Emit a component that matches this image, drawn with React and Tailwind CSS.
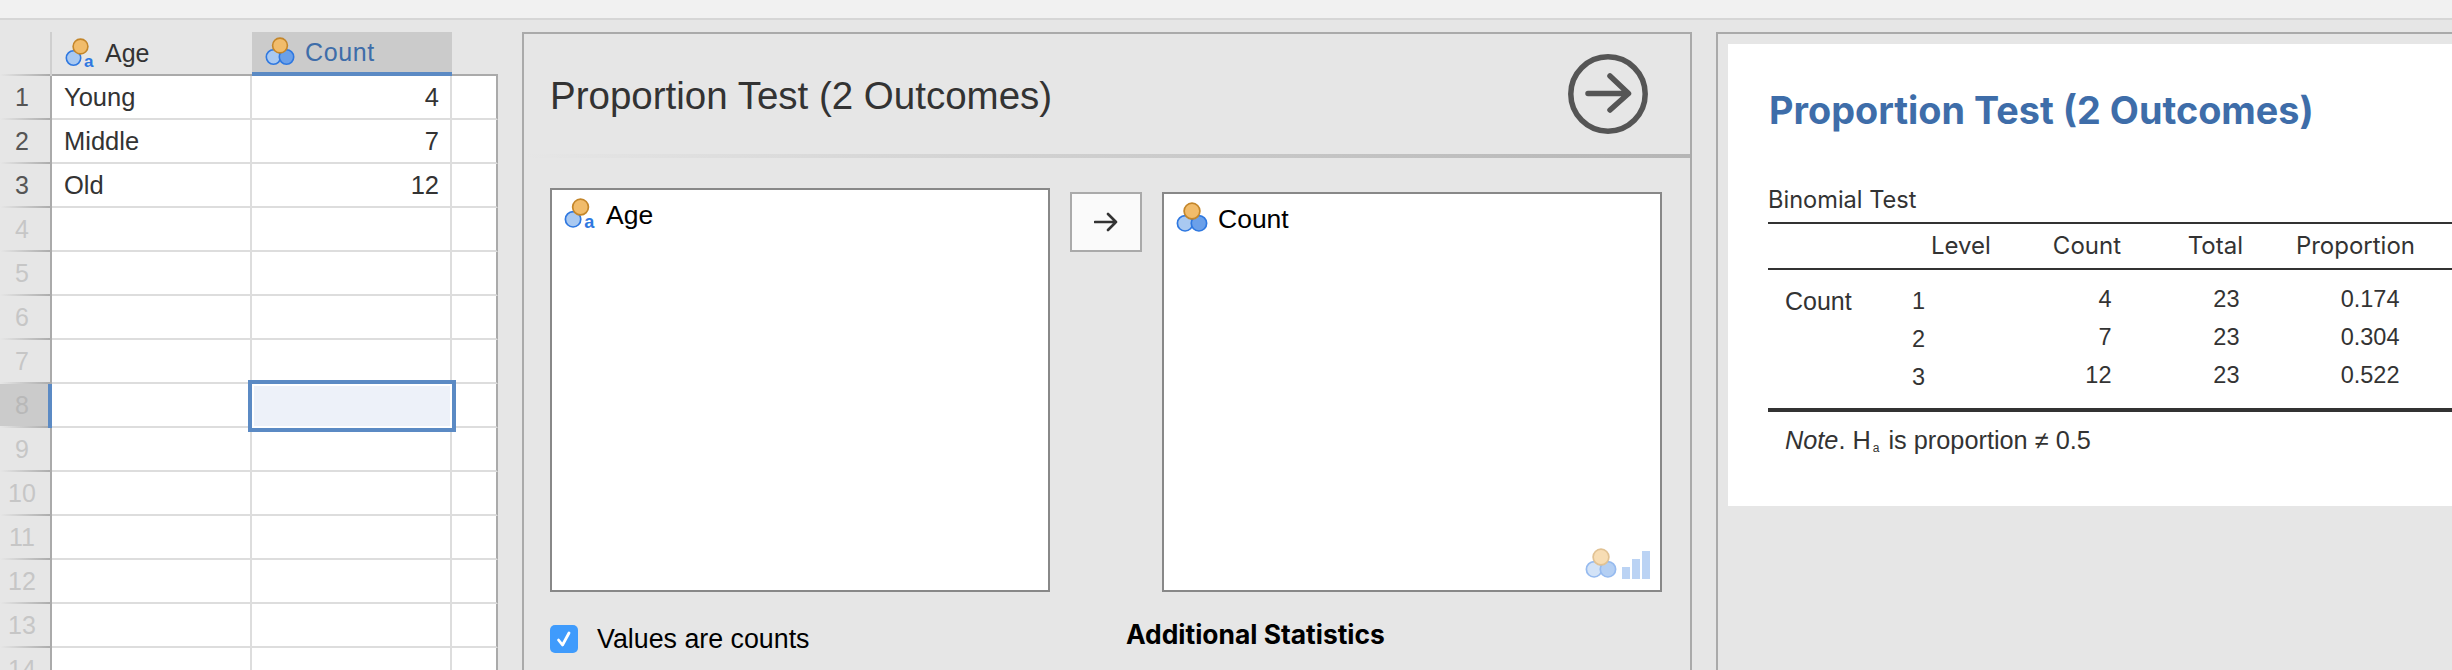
const helv = "font-['Liberation_Sans',Arial,sans-serif]";
const inter = "font-['Inter',sans-serif]";

const VarIcon = ({ kind, className = "" }) => (
  <svg viewBox="0 0 30 30" className={`overflow-visible ${className}`}>
    <circle cx="8.5" cy="20" r="7.2" fill="#a9c9f1" stroke="#2f78e0" strokeWidth="1.6" />
    {kind === "nominal" ? (
      <>
        <circle cx="21.5" cy="20" r="7.2" fill="#6ba0e9" stroke="#2f78e0" strokeWidth="1.6" />
        <circle cx="15" cy="8.5" r="7.4" fill="#f1bc6b" stroke="#c4862a" strokeWidth="1.6" />
      </>
    ) : (
      <>
        <circle cx="15.5" cy="8.5" r="7.4" fill="#f1bc6b" stroke="#c4862a" strokeWidth="1.6" />
        <text x="19" y="28.5" fontSize="17" fontWeight="700" fill="#2f78e0" fontFamily="Liberation Sans, sans-serif">a</text>
      </>
    )}
  </svg>
);

const rows = [
  ["Young", "4"],
  ["Middle", "7"],
  ["Old", "12"],
  ...Array.from({ length: 11 }, () => ["", ""]),
];

const numColor = (i) => {
  if (i < 3) return "text-[#555555]";
  if (i === 7) return "text-[#b8b8b8] bg-[#cbcbcb]";
  return "text-[#c6c6c6]";
};

const Spreadsheet = () => (
  <div className={`w-[498px] shrink-0 ${helv} text-[25px] leading-[30px]`}>
    <div className="grid grid-cols-[52px_200px_200px_46px] h-[44px]">
      <div className="border-r-2 border-[#cfcfcf] relative">
        <div className="absolute bottom-0 left-0 right-0 h-[2px] bg-gradient-to-r from-[#e6e6e6] to-[#aaaaaa]" />
      </div>
      <div className="flex items-center gap-[10px] pl-[13px] border-b-2 border-[#aaaaaa] text-[#333333]">
        <VarIcon kind="text" className="w-[30px] h-[30px]" />
        <span>Age</span>
      </div>
      <div className="flex items-center gap-[10px] pl-[13px] bg-[#cbcbcb] border-b-4 border-[#5b8ac4] text-[#3e6da9]">
        <VarIcon kind="nominal" className="w-[30px] h-[30px]" />
        <span className="tracking-[0.6px]">Count</span>
      </div>
      <div className="border-b-2 border-[#aaaaaa]" />
    </div>
    {rows.map(([name, count], i) => {
      const active = i === 7;
      return (
        <div key={i} className="grid grid-cols-[52px_200px_200px_46px] h-[44px]">
          <div className="relative flex flex-col">
            <div className={`flex-1 flex items-center justify-center pr-[6px] border-r-2 ${numColor(i)} ${active ? "border-[#5b8ac4]" : "border-[#aaaaaa]"}`}>
              {i + 1}
            </div>
            <div className="h-[2px] bg-gradient-to-r from-[#e6e6e6] to-[#aaaaaa]" />
            {active && <div className="absolute right-0 top-0 bottom-0 w-[4px] bg-[#5b8ac4]" />}
          </div>
          <div className="bg-white border-r-2 border-b-2 border-[#dddddd] flex items-center pl-[12px] text-[25.5px] text-[#333333]">{name}</div>
          <div className="relative bg-white border-r-2 border-b-2 border-[#dddddd] flex items-center justify-end pr-[11px] text-[25.5px] text-[#333333]">
            {count}
            {active && (
              <div className="absolute z-10 -left-[4px] -right-[6px] -top-[4px] -bottom-[6px] border-4 border-[#5b8ac4]">
                <div className="h-full border-2 border-white bg-[#edf1f9]" />
              </div>
            )}
          </div>
          <div className="bg-white border-r-2 border-b-2 border-r-[#aaaaaa] border-b-[#dddddd]" />
        </div>
      );
    })}
  </div>
);

const OptionsPanel = () => (
  <div className={`ml-6 w-[1170px] shrink-0 border-2 border-b-0 border-[#aaaaaa] ${helv}`}>
    <div className="h-[120px] flex items-center justify-between pl-[26px] pr-[42px]">
      <h1 className="text-[38.5px] leading-[46px] pt-[3px] text-[#333333]">Proportion Test (2 Outcomes)</h1>
      <svg viewBox="0 0 80 80" className="w-[80px] h-[80px]" fill="none" stroke="#555555" strokeWidth="5.5" strokeLinecap="round" strokeLinejoin="round">
        <circle cx="40" cy="40" r="37.2" />
        <path d="M20 39.5H60M42 22L60.5 39.5L42 56" />
      </svg>
    </div>
    <div className="h-[4px] bg-gradient-to-r from-transparent to-[#b5b5b5]" />
    <div className="pl-[26px] pt-[30px]">
      <div className="flex items-start">
        <div className="w-[500px] h-[404px] border-2 border-[#888888] bg-white flex items-start pl-[12px] pt-[8px] gap-[10px] text-[26.5px] leading-[42px] text-black">
          <VarIcon kind="text" className="w-[32px] h-[32px]" />
          <span className="-mt-[4px]">Age</span>
        </div>
        <button className="ml-5 mt-1 w-[72px] h-[60px] border-2 border-[#aaaaaa] bg-[#fafafa] flex items-center justify-center">
          <svg viewBox="0 0 24 20" className="w-[24px] h-[20px]" fill="none" stroke="#333333" strokeWidth="2.6" strokeLinecap="round" strokeLinejoin="round">
            <path d="M1 10H22M14 2L22 10L14 18" />
          </svg>
        </button>
        <div className="relative ml-5 mt-1 w-[500px] h-[400px] border-2 border-[#888888] bg-white flex items-start pl-[12px] pt-[8px] gap-[10px] text-[26.5px] leading-[42px] text-black">
          <VarIcon kind="nominal" className="w-[32px] h-[32px]" />
          <span className="-mt-[4px]">Count</span>
          <div className="absolute right-[10px] bottom-[10px] flex items-end gap-[5px] opacity-50">
            <VarIcon kind="nominal" className="w-[32px] h-[32px]" />
            <div className="flex items-end gap-[2px] h-[28px] mb-[1px]">
              <div className="w-[8px] h-[12px] bg-[#7aa8ea]" />
              <div className="w-[8px] h-[20px] bg-[#7aa8ea]" />
              <div className="w-[8px] h-[28px] bg-[#7aa8ea]" />
            </div>
          </div>
        </div>
      </div>
      <div className="flex items-start mt-[32px]">
        <label className="w-[576px] flex items-center gap-[19px] text-[26.8px] leading-[30px] text-black">
          <span className="w-[28px] h-[28px] rounded-[5px] bg-[#3f9bfc] flex items-center justify-center">
            <svg viewBox="0 0 20 20" className="w-[20px] h-[20px]" fill="none" stroke="white" strokeWidth="2.8" strokeLinecap="round" strokeLinejoin="round">
              <path d="M4.5 11L8.5 16L15 4" />
            </svg>
          </span>
          Values are counts
        </label>
        <h2 className={`${inter} font-bold text-[26.4px] leading-[28px] -mt-[4px] text-black`}>Additional Statistics</h2>
      </div>
    </div>
  </div>
);

const ResultRow = ({ name, level, count, total, prop }) => (
  <div className={`flex items-center h-[38px] pl-[17px] ${helv} text-[23.5px] text-[#333333]`}>
    <div className="w-[127px] text-[25px]">{name}</div>
    <div className="w-[60px]">{level}</div>
    <div className="w-[139.5px] text-right pb-1">{count}</div>
    <div className="w-[128px] text-right pb-1">{total}</div>
    <div className="w-[160px] text-right pb-1">{prop}</div>
  </div>
);

const Results = () => (
  <div className="ml-6 flex-1 border-l-2 border-t-2 border-[#aaaaaa] pl-[10px] pt-[10px]">
    <div className="h-[462px] bg-white pl-[40px]">
      <h1 className={`${inter} font-bold text-[#3e6da9] text-[37.8px] leading-[46px] pt-[43px] h-[89px] ml-[1px]`}>Proportion Test (2 Outcomes)</h1>
      <div className={`${inter} text-[23.6px] leading-[28px] mt-[53px] mb-[8px] text-[#333333]`}>Binomial Test</div>
      <div className="border-t-2 border-b-2 border-[#333333] h-[48px] flex items-center pl-[163px] text-[#333333] text-[24px]">
        <div className={`${inter} w-[58px]`}>Level</div>
        <div className={`${inter} w-[132px] text-right`}>Count</div>
        <div className={`${inter} w-[122px] text-right`}>Total</div>
        <div className={`${inter} w-[172px] text-right`}>Proportion</div>
      </div>
      <div className="pt-[13px] pb-[11px] border-b-4 border-[#333333]">
        <ResultRow name="Count" level="1" count="4" total="23" prop="0.174" />
        <ResultRow level="2" count="7" total="23" prop="0.304" />
        <ResultRow level="3" count="12" total="23" prop="0.522" />
      </div>
      <div className={`mt-[12px] pl-[17px] ${helv} text-[25.3px] leading-[32px] text-[#333333]`}>
        <i>Note</i>. H<sub className="text-[12px] ml-[2px] mr-[2px]">a</sub> is proportion ≠ 0.5
      </div>
    </div>
  </div>
);

export default function App() {
  return (
    <div className="w-[2452px] h-[670px] overflow-hidden bg-[#e6e6e6] flex flex-col">
      <div className="h-[20px] shrink-0 bg-[#f1f1f1] border-b-2 border-[#d6d6d6]" />
      <div className="flex flex-1 pt-3 min-h-0">
        <Spreadsheet />
        <OptionsPanel />
        <Results />
      </div>
    </div>
  );
}
